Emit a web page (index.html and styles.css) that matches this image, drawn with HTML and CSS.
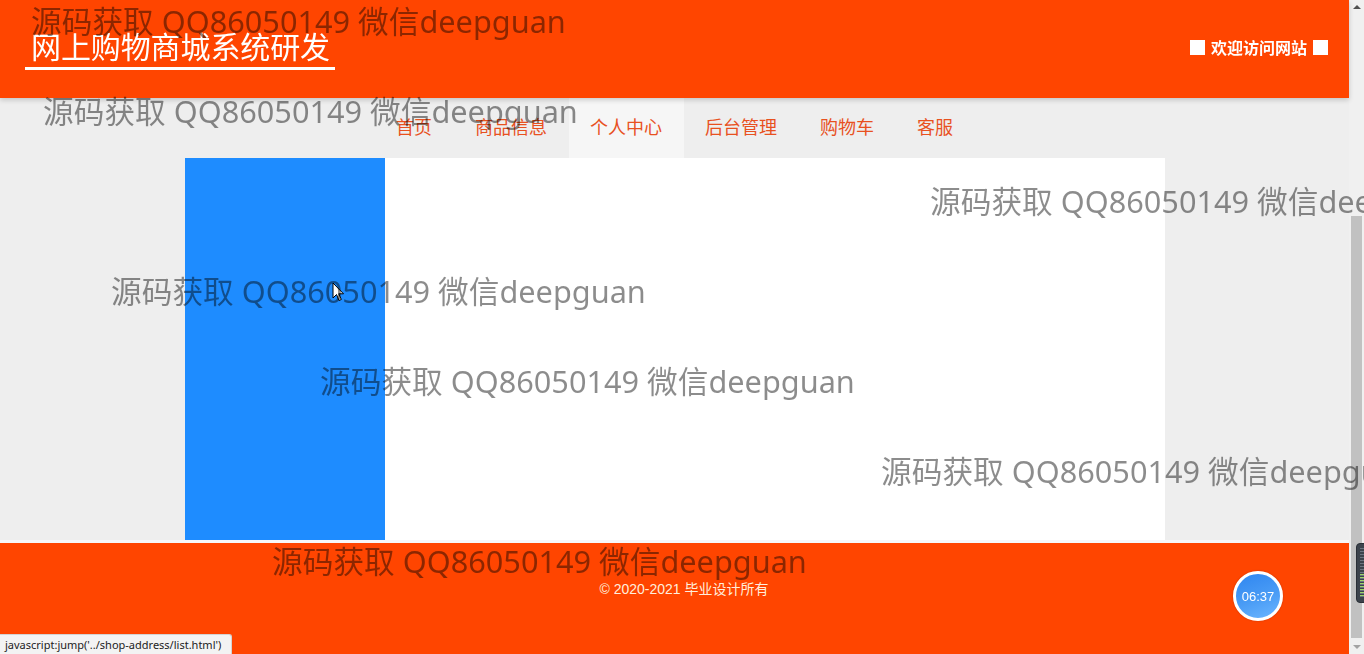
FILE: index.html
```html
<!DOCTYPE html>
<html lang="zh-CN">
<head>
<meta charset="utf-8">
<title>网上购物商城系统研发</title>
<link rel="stylesheet" href="styles.css">
</head>
<body>
<div class="page">
  <header class="top">
    <div class="brand">网上购物商城系统研发</div>
    <div class="welcome"><span class="sq"></span><span>欢迎访问网站</span><span class="sq"></span></div>
  </header>
  <nav class="nav">
    <a class="nav-item">首页</a>
    <a class="nav-item">商品信息</a>
    <a class="nav-item active">个人中心</a>
    <a class="nav-item">后台管理</a>
    <a class="nav-item">购物车</a>
    <a class="nav-item">客服</a>
  </nav>
  <main class="main">
    <aside class="side"></aside>
    <section class="content"></section>
  </main>
  <footer class="footer">
    <p class="copy">© 2020-2021 毕业设计所有</p>
  </footer>
</div>

<div class="timer">06:37</div>

<div class="scrollbar">
  <span class="arrow up"></span>
  <span class="thumb"></span>
  <span class="arrow down"></span>
</div>
<div class="widget"><span class="bars"></span></div>

<div class="status">javascript:jump('../shop-address/list.html')</div>

<svg class="cursor" width="13" height="20" viewBox="0 0 13 20">
  <path d="M1 1 L1 16 L4.5 12.5 L7 18.5 L9.3 17.5 L6.8 11.8 L11.5 11.8 Z" fill="#fff" stroke="#000" stroke-width="1"/>
</svg>

<div class="wm-layer">
  <span class="wm w1">源码获取 QQ86050149 微信deepguan</span>
  <span class="wm w2">源码获取 QQ86050149 微信deepguan</span>
  <span class="wm w3">源码获取 QQ86050149 微信deepguan</span>
  <span class="wm w4">源码获取 QQ86050149 微信deepguan</span>
  <span class="wm w5">源码获取 QQ86050149 微信deepguan</span>
  <span class="wm w6">源码获取 QQ86050149 微信deepguan</span>
  <span class="wm w7">源码获取 QQ86050149 微信deepguan</span>
</div>
</body>
</html>
```

FILE: styles.css
```css
* { box-sizing: border-box; }
html, body { margin: 0; padding: 0; }
body {
  background: #eeeeee;
  overflow: hidden;
  width: 1364px;
  height: 654px;
  font-family: "Noto Sans CJK SC", "Noto Sans", sans-serif;
}
.page { width: 1349px; }

.top {
  height: 98px;
  background: #ff4500;
  display: flex;
  align-items: center;
  justify-content: space-between;
  position: relative;
  z-index: 1;
  box-shadow: 0 2px 5px rgba(0,0,0,0.18);
}
.brand {
  margin-left: 25px;
  padding: 0 5px 6px 6px;
  font-size: 30px;
  line-height: 32px;
  color: #fff;
  border-bottom: 3px solid #fff;
  letter-spacing: -0.1px;
}
.welcome {
  margin-right: 21px;
  margin-bottom: 4px;
  display: flex;
  align-items: center;
  gap: 6px;
  font-size: 16px;
  font-weight: bold;
  color: #fff;
}
.sq { width: 15px; height: 15px; background: #fff; display: inline-block; }

.nav {
  height: 60px;
  display: flex;
  justify-content: center;
}
.nav-item {
  padding: 0 21.5px 4px;
  line-height: 56px;
  font-size: 18px;
  color: #e8511f;
  cursor: pointer;
}
.nav-item.active { background: #f6f6f6; }

.main {
  width: 980px;
  height: 382px;
  margin: 0 auto;
  display: flex;
}
.side { width: 200px; background: #1e8cff; }
.content { flex: 1; background: #fff; }

.footer {
  height: 114px;
  background: #ff4500;
  border-top: 3px solid #f7f7f7;
  padding-top: 36px;
}
.copy {
  margin: 0;
  text-align: center;
  font-family: "Liberation Sans", "Noto Sans CJK SC", sans-serif;
  font-size: 14px;
  line-height: 20px;
  color: #ffeedd;
  padding-left: 19px;
}

.timer {
  position: fixed;
  left: 1233px;
  top: 571px;
  width: 50px;
  height: 50px;
  border-radius: 50%;
  border: 3px solid #fff;
  background: linear-gradient(160deg, #2f86f0 0%, #4a9cf5 55%, #6cb6ff 100%);
  color: #fff;
  font-family: "Liberation Sans", sans-serif;
  font-size: 13px;
  display: flex;
  align-items: center;
  justify-content: center;
  box-shadow: 0 0 2px rgba(0,0,0,0.25);
}

.scrollbar {
  position: fixed;
  left: 1349px;
  top: 0;
  width: 15px;
  height: 654px;
  background: #f0f0f0;
}
.thumb {
  position: absolute;
  left: 2px;
  top: 216px;
  width: 11px;
  height: 422px;
  background: #c1c1c1;
}
.arrow {
  position: absolute;
  left: 4px;
  width: 0;
  height: 0;
  border-left: 4px solid transparent;
  border-right: 4px solid transparent;
}
.arrow.up { top: 5px; border-bottom: 4px solid #505050; }
.arrow.down { bottom: 5px; border-top: 4px solid #a3a3a3; }

.widget {
  position: fixed;
  left: 1356px;
  top: 543px;
  width: 22px;
  height: 60px;
  border-radius: 4px;
  background: #3c434c;
  border: 1px solid #2a2f36;
}
.bars {
  position: absolute;
  left: 3px;
  top: 4px;
  width: 8px;
  height: 50px;
  background: repeating-linear-gradient(180deg, #6b7480 0 1px, transparent 1px 3px);
}
.bars::after {
  content: "";
  position: absolute;
  left: 0; right: 0; bottom: 0;
  height: 24px;
  background: repeating-linear-gradient(180deg, #9fd46a 0 1px, transparent 1px 3px);
}

.status {
  position: fixed;
  left: 0;
  top: 634px;
  height: 20px;
  width: 232px;
  padding: 0 0 0 5px;
  background: #f3f3f3;
  border: 1px solid #d3d3d3;
  border-left: 0;
  border-bottom: 0;
  border-top-right-radius: 3px;
  font-family: "Noto Sans", "Open Sans", sans-serif;
  font-size: 11px;
  line-height: 19px;
  color: #222;
  white-space: nowrap;
}

.cursor {
  position: fixed;
  left: 332px;
  top: 282px;
  z-index: 5;
}

.wm-layer {
  position: fixed;
  inset: 0;
  pointer-events: none;
  overflow: hidden;
  z-index: 10;
}
.wm {
  position: absolute;
  white-space: nowrap;
  font-family: "Noto Sans", "Noto Sans CJK SC", sans-serif;
  font-size: 30.7px;
  line-height: 30px;
  color: rgba(0,0,0,0.45);
}
.w1 { left: 31px; top: 6px; }
.w2 { left: 43px; top: 96px; }
.w3 { left: 930px; top: 186px; }
.w4 { left: 111px; top: 276px; }
.w5 { left: 320px; top: 366px; }
.w6 { left: 881px; top: 456px; }
.w7 { left: 272px; top: 546px; }
```
